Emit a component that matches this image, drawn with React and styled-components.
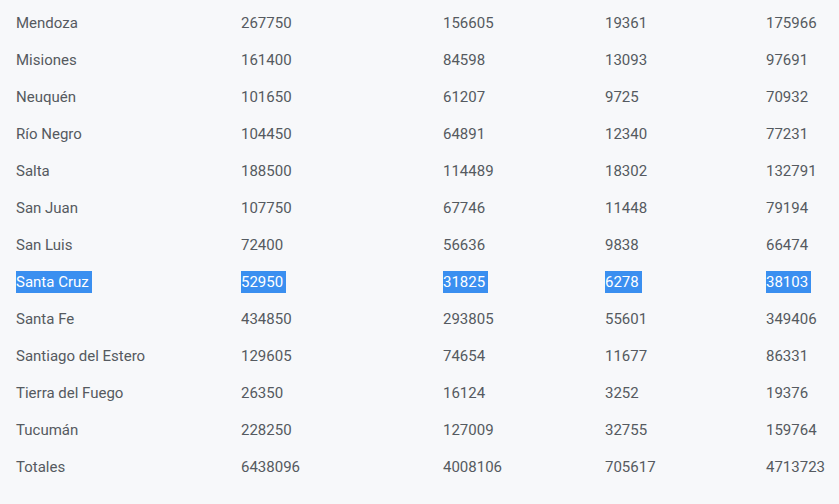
import React from "react";
import styled, { createGlobalStyle } from "styled-components";

const Global = createGlobalStyle`
  html, body { margin: 0; padding: 0; background: #f7f8fa; }
  body { font-family: Roboto, "Liberation Sans", sans-serif; overflow: hidden; }
`;

const Page = styled.div`
  width: 839px;
  height: 504px;
  background: #f7f8fa;
  padding-top: 4px;
  box-sizing: border-box;
  overflow: hidden;
`;

const Table = styled.div`
  display: flex;
  flex-direction: column;
`;

const Row = styled.div`
  display: grid;
  grid-template-columns: 225px 202px 162px 161px 1fr;
  height: 37px;
  align-items: center;
  padding-left: 16px;
  font-size: 15px;
  color: #555a60;
`;

const Cell = styled.div`
  white-space: nowrap;
  line-height: 22px;
`;

const Text = styled.span`
  display: inline-block;
  line-height: 22px;
  padding-right: ${(p) => (p.$selected ? "3px" : "0")};
  background: ${(p) => (p.$selected ? "#3a8ff0" : "transparent")};
  color: ${(p) => (p.$selected ? "#ffffff" : "inherit")};
`;

const rows = [
  ["Mendoza", 267750, 156605, 19361, 175966],
  ["Misiones", 161400, 84598, 13093, 97691],
  ["Neuquén", 101650, 61207, 9725, 70932],
  ["Río Negro", 104450, 64891, 12340, 77231],
  ["Salta", 188500, 114489, 18302, 132791],
  ["San Juan", 107750, 67746, 11448, 79194],
  ["San Luis", 72400, 56636, 9838, 66474],
  ["Santa Cruz", 52950, 31825, 6278, 38103],
  ["Santa Fe", 434850, 293805, 55601, 349406],
  ["Santiago del Estero", 129605, 74654, 11677, 86331],
  ["Tierra del Fuego", 26350, 16124, 3252, 19376],
  ["Tucumán", 228250, 127009, 32755, 159764],
  ["Totales", 6438096, 4008106, 705617, 4713723],
];

export default function App() {
  return (
    <>
      <Global />
      <Page>
        <Table>
          {rows.map((r) => {
            const sel = r[0] === "Santa Cruz";
            return (
              <Row key={r[0]}>
                {r.map((v, i) => (
                  <Cell key={i}>
                    <Text $selected={sel}>{v}</Text>
                  </Cell>
                ))}
              </Row>
            );
          })}
        </Table>
      </Page>
    </>
  );
}
